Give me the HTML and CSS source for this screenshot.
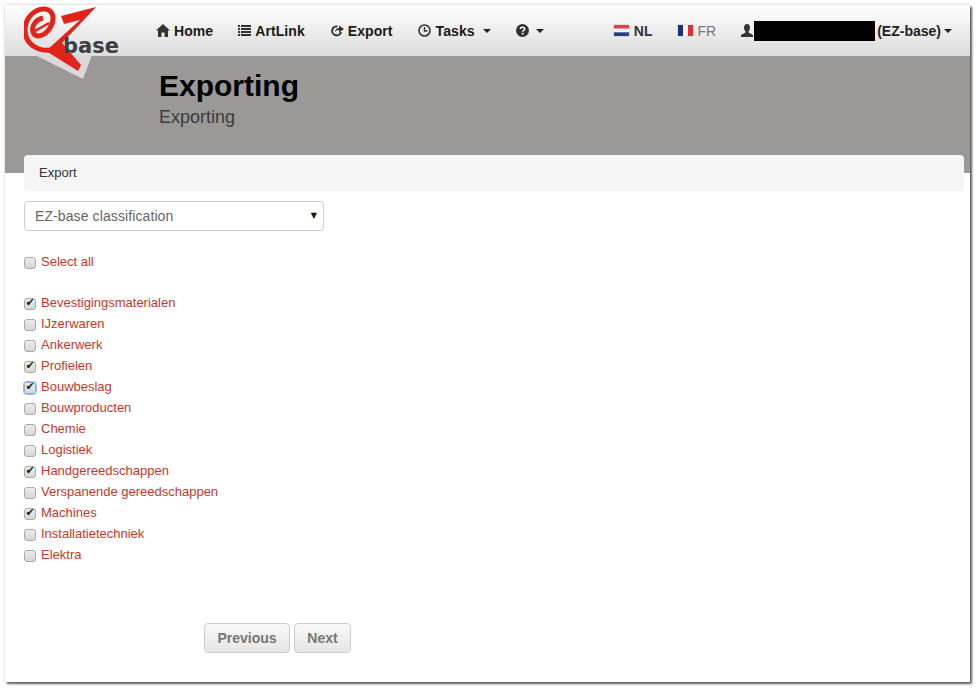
FILE: index.html
```html
<!DOCTYPE html>
<html lang="en">
<head>
<meta charset="utf-8">
<title>Exporting</title>
<link rel="stylesheet" href="styles.css">
</head>
<body>
<div class="window">
  <div class="logo">
    <svg width="100" height="76" viewBox="24 5 100 76">
      <polygon points="35,55 83,79 92,55" fill="#d9d9d9"/>
      <path d="M61 16 L96 7 L62 43 L81 65 L78 71 L46 51 L80 20 L64 24 Z" fill="#e2231a"/>
      <path d="M52 50 C38 52 25 44 25 30 C25 17 36 8 45 9 C54 10 55 20 50 28 C45 36 35 39 33 32 C31 25 37 19 43 18" fill="none" stroke="#e2231a" stroke-width="5"/>
      <path d="M35 31 L49 23" fill="none" stroke="#e2231a" stroke-width="2.5"/>
    </svg>
    <span class="logo-text">base</span>
  </div>
  <nav class="navbar">
    <ul class="nav-left">
      <li class="nav-item">
        <svg class="ico" width="14" height="13" viewBox="0 0 14 13"><path d="M7 0 L14 6.5 L12 6.5 L12 13 L8.5 13 L8.5 8.5 L5.5 8.5 L5.5 13 L2 13 L2 6.5 L0 6.5 Z" fill="#333"/></svg>
        Home
      </li>
      <li class="nav-item">
        <svg class="ico" width="13" height="11" viewBox="0 0 13 11"><path d="M0 0h2v2H0zM3 0h10v2H3zM0 3h2v2H0zM3 3h10v2H3zM0 6h2v2H0zM3 6h10v2H3zM0 9h2v2H0zM3 9h10v2H3z" fill="#333"/></svg>
        ArtLink
      </li>
      <li class="nav-item">
        <svg class="ico" width="14" height="13" viewBox="0 0 14 13"><path d="M7.5 2.5 A4.5 4.5 0 1 0 11 8" fill="none" stroke="#333" stroke-width="2"/><path d="M5 8 C5 5.5 7 4 9 4 V1.5 L14 5 L9 8.5 V6 C7.5 6 6 6.5 5 8 Z" fill="#333"/></svg>
        Export
      </li>
      <li class="nav-item">
        <svg class="ico" width="13" height="13" viewBox="0 0 13 13"><circle cx="6.5" cy="6.5" r="5.5" fill="none" stroke="#333" stroke-width="1.6"/><path d="M6.5 3V7H9.5" fill="none" stroke="#333" stroke-width="1.5"/></svg>
        Tasks
        <span class="caret"></span>
      </li>
      <li class="nav-item">
        <svg class="ico" width="13" height="13" viewBox="0 0 13 13"><circle cx="6.5" cy="6.5" r="6.5" fill="#333"/><path d="M4.3 5 C4.5 2.6 8.7 2.6 8.7 5 C8.7 6.4 6.6 6.3 6.6 7.7" fill="none" stroke="#fff" stroke-width="1.5"/><rect x="5.7" y="8.8" width="1.8" height="1.7" fill="#fff"/></svg>
        <span class="caret"></span>
      </li>
    </ul>
    <ul class="nav-right">
      <li class="nav-item lang">
        <svg class="flag" width="15" height="11" viewBox="0 0 15 11"><rect width="15" height="3.7" fill="#d9434f"/><rect y="3.7" width="15" height="3.6" fill="#f4f4f4"/><rect y="7.3" width="15" height="3.7" fill="#27407f"/></svg>
        NL
      </li>
      <li class="nav-item lang lang-off">
        <svg class="flag" width="15" height="11" viewBox="0 0 15 11"><rect width="5" height="11" fill="#1c2f7c"/><rect x="5" width="5" height="11" fill="#f4f4f4"/><rect x="10" width="5" height="11" fill="#d9303c"/></svg>
        FR
      </li>
      <li class="nav-item user">
        <svg class="ico" width="12" height="13" viewBox="0 0 12 13"><path d="M6 0 C8.3 0 9 2 9 3.8 C9 5.5 8 7 7.5 7.5 L7.5 8.5 L12 11 L12 13 L0 13 L0 11 L4.5 8.5 L4.5 7.5 C4 7 3 5.5 3 3.8 C3 2 3.7 0 6 0 Z" fill="#333"/></svg>
        <span class="redacted"></span>
        <span class="user-org">(EZ-base)</span>
        <span class="caret caret-tight"></span>
      </li>
    </ul>
  </nav>
  <header class="hero">
    <h1 class="hero-title">Exporting</h1>
    <p class="hero-sub">Exporting</p>
  </header>
  <main class="content">
    <div class="breadcrumb">Export</div>
    <div class="select-wrap">
      <select class="select">
        <option>EZ-base classification</option>
      </select>
      <span class="select-arrow">▼</span>
    </div>
    <label class="check check-all"><input type="checkbox"><a>Select all</a></label>
    <div class="check-list">
      <label class="check"><input type="checkbox" checked><a>Bevestigingsmaterialen</a></label>
      <label class="check"><input type="checkbox"><a>IJzerwaren</a></label>
      <label class="check"><input type="checkbox"><a>Ankerwerk</a></label>
      <label class="check"><input type="checkbox" checked><a>Profielen</a></label>
      <label class="check"><input type="checkbox" class="focused" checked><a>Bouwbeslag</a></label>
      <label class="check"><input type="checkbox"><a>Bouwproducten</a></label>
      <label class="check"><input type="checkbox"><a>Chemie</a></label>
      <label class="check"><input type="checkbox"><a>Logistiek</a></label>
      <label class="check"><input type="checkbox" checked><a>Handgereedschappen</a></label>
      <label class="check"><input type="checkbox"><a>Verspanende gereedschappen</a></label>
      <label class="check"><input type="checkbox" checked><a>Machines</a></label>
      <label class="check"><input type="checkbox"><a>Installatietechniek</a></label>
      <label class="check"><input type="checkbox"><a>Elektra</a></label>
    </div>
    <div class="actions">
      <button class="btn btn-prev" type="button">Previous</button>
      <button class="btn btn-next" type="button">Next</button>
    </div>
  </main>
</div>
</body>
</html>
```
FILE: styles.css
```css
* { box-sizing: border-box; }
html, body { height: 100%; }
body {
  margin: 0;
  padding: 5px 9px 9px 5px;
  background: #fff;
  font-family: "Liberation Sans", Arial, sans-serif;
  font-size: 14px;
  color: #333;
  overflow: hidden;
}
.window {
  position: relative;
  height: 677px;
  background: #fff;
  box-shadow: 0 0 3px rgba(0,0,0,.22), 2px 2px 2px rgba(0,0,0,.6);
}
.logo {
  position: absolute;
  left: 19px;
  top: 0;
  width: 100px;
  height: 76px;
  z-index: 2;
}
.logo svg { display: block; }
.logo-text {
  position: absolute;
  left: 39px;
  top: 27px;
  font-family: "DejaVu Sans", sans-serif;
  font-weight: bold;
  font-size: 21px;
  line-height: 28px;
  color: #3b3d40;
}
.navbar {
  display: flex;
  justify-content: space-between;
  align-items: center;
  height: 51px;
  padding: 0 18px 0 151px;
  background: linear-gradient(#fff, #dcdcdc);
  position: relative;
  z-index: 1;
}
.nav-left, .nav-right {
  display: flex;
  align-items: center;
  margin: 0;
  padding: 0;
  list-style: none;
}
.nav-left { gap: 25px; }
.nav-right { gap: 25px; }
.nav-item {
  display: flex;
  align-items: center;
  gap: 4px;
  font-weight: bold;
  color: #1a1a1a;
  line-height: 20px;
}
.nav-left .nav-item { letter-spacing: .08px; }
.nav-left .nav-item:nth-child(4) { gap: 5px; }
.ico, .flag { display: block; flex: none; }
.flag { box-shadow: 0 0 1px rgba(0,0,0,.4); }
.caret {
  display: block;
  width: 0;
  height: 0;
  margin-left: 3px;
  border-left: 4px solid transparent;
  border-right: 4px solid transparent;
  border-top: 4px solid #222;
}
.caret-tight { margin-left: -1px; }
.lang { gap: 5px; color: #333; }
.lang-off { font-weight: normal; color: #777; }
.user { gap: 1px; }
.redacted { display: block; width: 121px; height: 20px; background: #000; }
.user-org { margin-left: 1px; margin-right: 3px; color: #222; }
.hero {
  height: 117px;
  padding: 12px 0 0 154px;
  background: #9a9998;
}
.hero-title {
  margin: 0;
  font-size: 30px;
  line-height: 36px;
  font-weight: bold;
  color: #000;
}
.hero-sub {
  margin: 0;
  font-size: 18px;
  line-height: 26px;
  color: #3c3c3c;
}
.content { padding: 0 6px 0 19px; }
.breadcrumb {
  height: 36px;
  margin-top: -18px;
  padding: 0 15px;
  position: relative;
  background: #f5f5f5;
  border-radius: 4px;
  font-size: 13px;
  line-height: 35px;
  color: #333;
}
.select-wrap {
  position: relative;
  width: 300px;
  height: 30px;
  margin-top: 10px;
}
.select {
  display: block;
  width: 100%;
  height: 100%;
  padding: 0 10px;
  appearance: none;
  background: #fff;
  border: 1px solid #ccc;
  border-radius: 4px;
  font-family: "Liberation Sans", Arial, sans-serif;
  font-size: 14px;
  letter-spacing: .1px;
  color: #666;
}
.select-arrow {
  position: absolute;
  right: 7px;
  top: 9px;
  font-family: "DejaVu Sans", sans-serif;
  font-size: 8px;
  line-height: 12px;
  color: #111;
}
.check {
  display: flex;
  align-items: center;
  gap: 5px;
  height: 21px;
}
.check a { color: #c0392b; font-size: 13px; line-height: 20px; }
.check-all { margin-top: 20px; }
.check-list { margin-top: 20px; }
.check input {
  appearance: none;
  position: relative;
  flex: none;
  width: 12px;
  height: 12px;
  margin: 3px 0 0;
  background: linear-gradient(#ededed, #d6d6d6);
  border: 1px solid #aaa;
  border-radius: 3px;
}
.check input:checked::after {
  content: "✔";
  position: absolute;
  left: 0;
  top: -2px;
  width: 10px;
  text-align: center;
  font-family: "DejaVu Sans", sans-serif;
  font-size: 11px;
  line-height: 12px;
  color: #222;
}
.check input.focused { box-shadow: 0 0 0 1px #9fbfe6; border-color: #8aaedc; }
.actions {
  display: flex;
  gap: 4px;
  margin-top: 58px;
  padding-left: 180px;
}
.btn {
  height: 30px;
  padding: 0;
  background: linear-gradient(#f9f9f9, #e6e6e6);
  border: 1px solid #ccc;
  border-radius: 4px;
  font-family: "Liberation Sans", Arial, sans-serif;
  font-size: 14px;
  font-weight: bold;
  color: #777;
}
.btn-prev { width: 86px; }
.btn-next { width: 57px; }
```
